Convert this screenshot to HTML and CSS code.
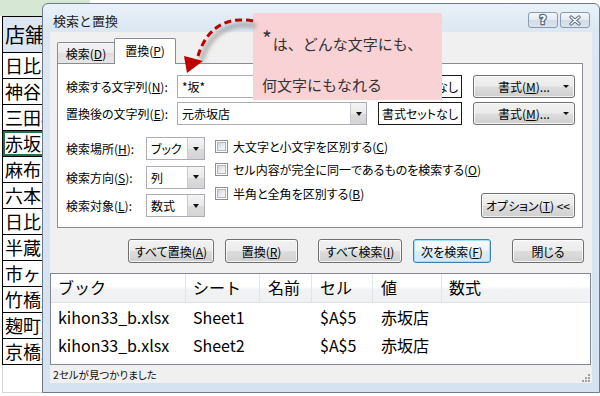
FILE: index.html
```html
<!DOCTYPE html>
<html lang="ja">
<head>
<meta charset="utf-8">
<link rel="stylesheet" href="styles.css">
</head>
<body>
<div class="desk">
  <div class="sheet">
    <div class="sheet-top"></div>
    <div class="cell head">店舗</div>
    <div class="cell">日比谷</div>
    <div class="cell">神谷町</div>
    <div class="cell">三田橋</div>
    <div class="cell sel">赤坂店</div>
    <div class="cell">麻布十番</div>
    <div class="cell">六本木</div>
    <div class="cell">日比谷</div>
    <div class="cell">半蔵門</div>
    <div class="cell">市ヶ谷</div>
    <div class="cell">竹橋店</div>
    <div class="cell">麹町店</div>
    <div class="cell">京橋店</div>
    <div class="cell empty"></div>
  </div>

  <div class="dialog">
    <div class="titlebar">
      <span class="title">検索と置換</span>
      <div class="caps">
        <span class="cap help">?</span>
        <span class="cap close"><svg width="14" height="11" viewBox="0 0 14 11"><path d="M3 2 L11 9 M11 2 L3 9" stroke="#56677b" stroke-width="3.2" stroke-linecap="round" fill="none"/><path d="M3 2 L11 9 M11 2 L3 9" stroke="#ffffff" stroke-width="1.4" stroke-linecap="round" fill="none"/></svg></span>
      </div>
    </div>
    <div class="client">
      <div class="tabs">
        <div class="tab">検索(<u>D</u>)</div>
        <div class="tab active">置換(<u>P</u>)</div>
      </div>
      <div class="panel">
        <div class="row">
          <span class="lbl">検索する文字列(<u>N</u>):</span>
          <div class="combo"><span class="val">*坂*</span><span class="drop"><i class="tri"></i></span></div>
          <div class="fmtbox">書式セットなし</div>
          <div class="btn fmt">書式(<u>M</u>)...<i class="tri small"></i></div>
        </div>
        <div class="row">
          <span class="lbl">置換後の文字列(<u>E</u>):</span>
          <div class="combo"><span class="val">元赤坂店</span><span class="drop"><i class="tri"></i></span></div>
          <div class="fmtbox">書式セットなし</div>
          <div class="btn fmt">書式(<u>M</u>)...<i class="tri small"></i></div>
        </div>
        <div class="lower">
          <div class="selcol">
            <div class="selrow"><span class="sl">検索場所(<u>H</u>):</span><div class="select"><span class="val">ブック</span><span class="drop"><i class="tri"></i></span></div></div>
            <div class="selrow"><span class="sl">検索方向(<u>S</u>):</span><div class="select"><span class="val">列</span><span class="drop"><i class="tri"></i></span></div></div>
            <div class="selrow"><span class="sl">検索対象(<u>L</u>):</span><div class="select"><span class="val">数式</span><span class="drop"><i class="tri"></i></span></div></div>
          </div>
          <div class="chkcol">
            <div class="chk"><span class="box"><i></i></span>大文字と小文字を区別する(<u>C</u>)</div>
            <div class="chk"><span class="box"><i></i></span>セル内容が完全に同一であるものを検索する(<u>O</u>)</div>
            <div class="chk"><span class="box"><i></i></span>半角と全角を区別する(<u>B</u>)</div>
          </div>
          <div class="btn opt">オプション(<u>T</u>) &lt;&lt;</div>
        </div>
      </div>
      <div class="actions">
        <div class="btn a1">すべて置換(<u>A</u>)</div>
        <div class="btn a2">置換(<u>R</u>)</div>
        <div class="btn a3">すべて検索(<u>I</u>)</div>
        <div class="btn a4 focus">次を検索(<u>F</u>)</div>
        <div class="btn a5">閉じる</div>
      </div>
      <div class="list">
        <div class="lhead">
          <span>ブック</span><span>シート</span><span>名前</span><span>セル</span><span>値</span><span>数式</span>
        </div>
        <div class="lrow">
          <span>kihon33_b.xlsx</span><span>Sheet1</span><span></span><span>$A$5</span><span>赤坂店</span><span></span>
        </div>
        <div class="lrow">
          <span>kihon33_b.xlsx</span><span>Sheet2</span><span></span><span>$A$5</span><span>赤坂店</span><span></span>
        </div>
      </div>
      <div class="status">
        <span>2セルが見つかりました</span>
        <svg class="grip" width="10" height="10" viewBox="0 0 10 10"><g fill="#a0a0a0"><rect x="7" y="1" width="2" height="2"/><rect x="4" y="4" width="2" height="2"/><rect x="7" y="4" width="2" height="2"/><rect x="1" y="7" width="2" height="2"/><rect x="4" y="7" width="2" height="2"/><rect x="7" y="7" width="2" height="2"/></g></svg>
      </div>
    </div>
  </div>

  <div class="callout">
    <p class="l1"><span class="ast">*</span>は、どんな文字にも、</p>
    <p class="l2">何文字にもなれる</p>
  </div>

  <svg class="arrow" width="600" height="396" viewBox="0 0 600 396">
    <defs><filter id="bl" x="-20%" y="-20%" width="140%" height="140%"><feGaussianBlur stdDeviation="2"/></filter></defs>
    <path d="M253 21 C 232 17, 208 23, 198 56" transform="translate(3 5)" stroke="#7a7a7a" stroke-opacity="0.55" stroke-width="5" fill="none" filter="url(#bl)"/>
    <path d="M253 21 C 232 17, 208 23, 198 56" stroke="#c00000" stroke-width="3" stroke-dasharray="7 4" fill="none"/>
    <polygon points="187,73 184,56 203,61" fill="#c00000"/>
  </svg>
</div>
</body>
</html>
```

FILE: styles.css
```css
html, body {
  margin: 0;
  padding: 0;
}
body {
  width: 600px;
  height: 396px;
  overflow: hidden;
  background: #ffffff;
  font-family: "Noto Sans CJK JP", "Noto Sans", sans-serif;
  color: #000;
}
.desk {
  position: relative;
  width: 600px;
  height: 396px;
  overflow: hidden;
}

/* spreadsheet behind the dialog */
.sheet {
  width: 90px;
}
.sheet-top {
  height: 16px;
  background: #d6e8d4;
}
.cell {
  height: 26px;
  box-sizing: border-box;
  margin-left: 2px;
  border-left: 1px solid #000;
  border-bottom: 1px solid #000;
  font-size: 18px;
  line-height: 25px;
  padding-left: 2px;
  white-space: nowrap;
}
.cell.head {
  height: 37px;
  border-top: 1px solid #000;
  background: #dce6f1;
  font-size: 20px;
  line-height: 35px;
}
.cell.sel {
  box-shadow: inset 0 0 0 2px #217346;
}
.cell.empty {
  height: 28px;
  border-left-color: #d4d4d4;
  border-bottom-color: #d4d4d4;
}

/* dialog window */
.dialog {
  position: absolute;
  left: 42px;
  top: 3px;
  width: 558px;
  height: 390px;
  box-sizing: border-box;
  border: 1px solid #6c7a8c;
  border-radius: 6px 6px 0 0;
  background: linear-gradient(180deg, #eaf1f8 0px, #dce7f3 28px, #d5e2f0 100%);
  display: flex;
  flex-direction: column;
  font-feature-settings: "palt";
}
.titlebar {
  height: 28px;
  display: flex;
  align-items: flex-start;
}
.title {
  margin: 9px 0 0 10px;
  font-size: 13px;
  line-height: 16px;
  color: #1c1c1c;
  font-feature-settings: normal;
}
.caps {
  margin: 8px 9px 0 auto;
  display: flex;
  gap: 2px;
}
.cap {
  width: 30px;
  height: 16px;
  box-sizing: border-box;
  border: 1px solid #8898ad;
  border-radius: 3px;
  background: linear-gradient(180deg, #f5f8fb 0%, #e3eaf2 48%, #d2dce8 52%, #dbe4ee 100%);
  display: flex;
  align-items: center;
  justify-content: center;
}
.help {
  font-family: "DejaVu Sans", sans-serif;
  font-weight: bold;
  font-size: 12px;
  line-height: 14px;
  color: #ffffff;
  -webkit-text-stroke: 2.4px #56677b;
  paint-order: stroke fill;
}

.client {
  flex: 1;
  margin: 0 7px 9px 7px;
  background: #f0f0f0;
  display: flex;
  flex-direction: column;
}

/* tabs */
.tabs {
  display: flex;
  align-items: flex-end;
  height: 25px;
  margin: 6px 0 0 7px;
  position: relative;
  z-index: 1;
}
.tab {
  width: 58px;
  height: 21px;
  box-sizing: border-box;
  border: 1px solid #898c95;
  border-bottom: none;
  border-radius: 2px 2px 0 0;
  background: linear-gradient(180deg, #f3f3f3 0%, #ebebeb 50%, #dedede 51%, #e6e6e6 100%);
  font-size: 12px;
  display: flex;
  align-items: center;
  justify-content: center;
}
.tab.active {
  width: 62px;
  height: 26px;
  margin-bottom: -1px;
  margin-left: -1px;
  background: #ffffff;
  padding-bottom: 2px;
}
.panel {
  margin: 0 9px 0 7px;
  border: 1px solid #898c95;
  background: #ffffff;
  padding: 11px 7px 10px 8px;
}
.row {
  display: flex;
  align-items: center;
  height: 23px;
}
.row + .row {
  margin-top: 4px;
}
.lbl {
  width: 111px;
  font-size: 12px;
  white-space: nowrap;
}
.combo, .select {
  height: 23px;
  box-sizing: border-box;
  border: 1px solid #abadb3;
  background: #fff;
  display: flex;
  align-items: stretch;
}
.combo {
  width: 190px;
}
.select {
  width: 59px;
}
.val {
  flex: 1;
  font-size: 12px;
  line-height: 21px;
  padding-left: 4px;
  white-space: nowrap;
}
.drop {
  width: 16px;
  box-sizing: border-box;
  border-left: 1px solid #c9cbd0;
  background: linear-gradient(180deg, #f4f4f4 0%, #e9e9e9 50%, #dcdcdc 51%, #d4d4d4 100%);
  display: flex;
  align-items: center;
  justify-content: center;
}
.select .drop {
  width: 17px;
}
.tri {
  display: block;
  width: 0;
  height: 0;
  border-left: 3.5px solid transparent;
  border-right: 3.5px solid transparent;
  border-top: 4px solid #111;
}
.tri.small {
  border-left-width: 3px;
  border-right-width: 3px;
  border-top-width: 3px;
  margin-left: auto;
}
.fmtbox {
  width: 84px;
  height: 23px;
  box-sizing: border-box;
  margin-left: 11px;
  border: 1px solid #1a1a1a;
  background: #fff;
  font-size: 12px;
  display: flex;
  align-items: center;
  justify-content: center;
  white-space: nowrap;
}
.btn {
  height: 23px;
  box-sizing: border-box;
  border: 1px solid #707070;
  border-radius: 3px;
  background: linear-gradient(180deg, #f2f2f2 0%, #ebebeb 48%, #dddddd 52%, #cfcfcf 100%);
  box-shadow: inset 0 0 0 1px rgba(255, 255, 255, 0.75);
  font-size: 12px;
  display: flex;
  align-items: center;
  justify-content: center;
  white-space: nowrap;
}
.fmt {
  width: 102px;
  margin-left: 11px;
  justify-content: flex-start;
  padding: 0 5px 0 24px;
}

.lower {
  display: flex;
  align-items: flex-start;
  margin-top: 12px;
}
.selcol {
  display: flex;
  flex-direction: column;
  gap: 5.5px;
}
.selrow {
  display: flex;
  align-items: center;
  height: 23px;
}
.sl {
  width: 80px;
  font-size: 12px;
  white-space: nowrap;
}
.chkcol {
  margin: -2.5px 0 0 10px;
  display: flex;
  flex-direction: column;
}
.chk {
  height: 23.5px;
  display: flex;
  align-items: center;
  font-size: 12px;
  white-space: nowrap;
}
.box {
  width: 13px;
  height: 13px;
  box-sizing: border-box;
  border: 1px solid #8e8f8f;
  padding: 1px;
  background: #fff;
  margin-right: 5px;
}
.box i {
  display: block;
  width: 9px;
  height: 9px;
  box-sizing: border-box;
  border: 1px solid #b3b7bd;
  background: linear-gradient(135deg, #cfd3d9 0%, #eceef0 60%, #f8f8f8 100%);
}
.opt {
  width: 101px;
  height: 25px;
  margin-left: auto;
  align-self: flex-end;
  margin-bottom: -1px;
}

.actions {
  display: flex;
  height: 24px;
  margin-top: 11px;
  padding-left: 78px;
}
.actions .btn {
  height: 24px;
}
.a1 { width: 86px; }
.a2 { width: 73px; margin-left: 11px; }
.a3 { width: 84px; margin-left: 20px; }
.a4 { width: 78px; margin-left: 11px; }
.a5 { width: 72px; margin-left: 21px; }
.btn.focus {
  border-color: #3c7fb1;
  background: linear-gradient(180deg, #f7fbfe 0%, #ecf5fc 48%, #dcedfa 52%, #d3e8f9 100%);
  box-shadow: inset 0 0 0 1px #9fe1fb;
}

/* results list */
.list {
  margin-top: 10px;
  margin-right: 1px;
  height: 92px;
  box-sizing: border-box;
  border: 1px solid #828790;
  background: #ffffff;
}
.lhead, .lrow {
  display: grid;
  grid-template-columns: 135px 74px 52px 61px 69px 1fr;
  height: 28px;
  font-size: 16px;
  font-feature-settings: normal;
}
.lhead {
  background: linear-gradient(180deg, #ffffff 0%, #ffffff 45%, #f1f2f4 55%, #f0f1f3 100%);
  border-bottom: 1px solid #dcdfe4;
}
.lhead span {
  border-right: 1px solid #e1e4e9;
  padding-left: 7px;
  line-height: 27px;
}
.lhead span:last-child {
  border-right: none;
}
.lrow span {
  padding-left: 7px;
  line-height: 28px;
  white-space: nowrap;
}
.lhead span:nth-child(3), .lhead span:nth-child(4), .lhead span:nth-child(5),
.lrow span:nth-child(3), .lrow span:nth-child(4), .lrow span:nth-child(5) {
  padding-left: 8px;
}

.status {
  flex: 1;
  display: flex;
  align-items: center;
  padding-left: 3px;
  font-size: 10.5px;
  color: #111;
}
.grip {
  margin-left: auto;
  align-self: flex-end;
  margin-right: 1px;
}

/* callout overlay */
.callout {
  position: absolute;
  left: 253px;
  top: 13px;
  width: 189px;
  height: 87px;
  box-sizing: border-box;
  background: #f9d2d5;
  color: #333333;
  font-size: 15px;
  padding: 15px 0 0 9px;
}
.callout p {
  margin: 0;
  line-height: 20px;
  white-space: nowrap;
}
.callout .l2 {
  margin-top: 21px;
}
.ast {
  font-size: 21px;
  vertical-align: 3px;
  margin-right: 1px;
}
.arrow {
  position: absolute;
  left: 0;
  top: 0;
  pointer-events: none;
}
```
